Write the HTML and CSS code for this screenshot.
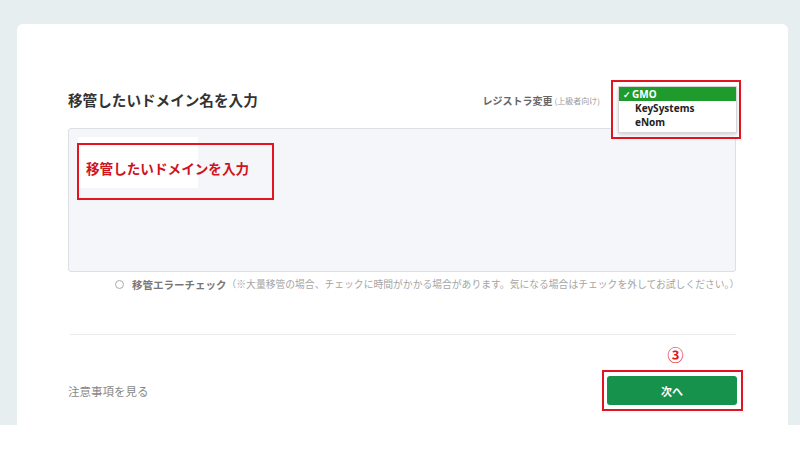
FILE: index.html
```html
<!DOCTYPE html>
<html>
<head>
  <meta charset="UTF-8" />
  <link rel="stylesheet" href="styles.css">
</head>
<body>
  <div class="stage">
    <div class="card">
      <div class="head-row">
        <h2 class="title">移管したいドメイン名を入力</h2>
        <div class="registrar">
          <span class="reg-label">レジストラ変更</span>
          <span class="reg-note">(上級者向け)</span>
        </div>
        <div class="select-anchor">
          <div class="mark menu-mark">
            <ul class="menu">
              <li class="active"><span class="tick">✓</span>GMO</li>
              <li>KeySystems</li>
              <li>eNom</li>
            </ul>
          </div>
        </div>
      </div>

      <div class="domain-box">
        <div class="patch"></div>
        <div class="mark hint-mark">
          <span class="hint">移管したいドメインを入力</span>
        </div>
      </div>

      <label class="check-row">
        <span class="radio"></span>
        <span class="check-label">移管エラーチェック</span>
        <span class="check-note">（※大量移管の場合、チェックに時間がかかる場合があります。気になる場合はチェックを外してお試しください。）</span>
      </label>

      <hr class="divider">

      <div class="foot-row">
        <a class="notes-link">注意事項を見る</a>
        <div class="next-col">
          <span class="step">③</span>
          <div class="mark btn-mark">
            <button type="submit" class="next-btn">次へ</button>
          </div>
        </div>
      </div>
    </div>
  </div>
  <div class="bottom-strip"></div>
</body>
</html>
```

FILE: styles.css
```css
body {
    margin: 0;
    background: #fff;
    font-family: "Noto Sans CJK JP", "Noto Sans", sans-serif;
    color: #333;
}

.stage {
    height: 425px;
    box-sizing: border-box;
    padding: 24px 12px 0 17px;
    background: #e7eef0;
}

.card {
    height: 100%;
    box-sizing: border-box;
    padding: 66px 52px 0 51px;
    background: #fff;
    border-radius: 6px 6px 0 0;
}

.head-row {
    display: flex;
    align-items: center;
    height: 20px;
}

.title {
    margin: 0;
    flex: 1;
    font-size: 14.6px;
    line-height: 20px;
    font-weight: bold;
    color: #333;
}

.registrar {
    display: flex;
    align-items: center;
    gap: 2px;
    margin-right: 11px;
    color: #666;
}

.reg-label {
    font-size: 10px;
    font-weight: bold;
}

.reg-note {
    font-size: 8px;
    color: #999;
}

.select-anchor {
    position: relative;
    width: 125px;
    height: 20px;
}

.mark {
    border: 2px solid #e2141f;
    box-sizing: border-box;
}

.menu-mark {
    position: absolute;
    left: 0;
    top: -10px;
    width: 130px;
    height: 59px;
    padding: 4px 2px 3px 5px;
    background: #fff;
    z-index: 2;
}

.menu {
    list-style: none;
    margin: 0;
    padding: 0 0 3px;
    background: #fff;
    border: 1px solid #d6d6d6;
    box-shadow: 0 2px 4px rgba(0, 0, 0, 0.18);
    font-family: "Noto Sans", sans-serif;
    font-size: 10px;
    font-weight: bold;
    color: #222;
}

.menu li {
    height: 14px;
    line-height: 14px;
    padding-left: 16px;
}

.menu li.active {
    padding-left: 4px;
    background: #1f9a2c;
    color: #fff;
}

.tick {
    display: inline-block;
    width: 9px;
    font-size: 9px;
}

.domain-box {
    position: relative;
    margin-top: 18px;
    height: 144px;
    box-sizing: border-box;
    background: #f4f6f9;
    border: 1px solid #dcdfe4;
    border-radius: 3px;
}

.patch {
    position: absolute;
    left: 9px;
    top: 8px;
    width: 120px;
    height: 51px;
    background: #fff;
}

.hint-mark {
    position: absolute;
    left: 8px;
    top: 14px;
    width: 197px;
    height: 57px;
    padding: 10px 0 0 7px;
}

.hint {
    font-size: 13.6px;
    font-weight: bold;
    color: #d0121f;
    font-family: "Noto Sans CJK JP", serif;
}

.check-row {
    display: flex;
    align-items: center;
    margin-top: 5px;
    padding-left: 47px;
    height: 14px;
    white-space: nowrap;
}

.check-row > span {
    flex-shrink: 0;
}

.radio {
    width: 7px;
    height: 7px;
    border: 1px solid #aaa;
    border-radius: 50%;
    margin-right: 8px;
}

.check-label {
    font-size: 10.5px;
    font-weight: bold;
    color: #777;
}

.check-note {
    font-size: 9.8px;
    color: #a5a5a5;
}

.divider {
    margin: 43px 0 0 2px;
    border: none;
    border-top: 1px solid #ebebeb;
}

.foot-row {
    display: flex;
    justify-content: space-between;
    align-items: flex-end;
    margin-top: 10px;
}

.notes-link {
    margin-bottom: 12px;
    font-size: 11.5px;
    line-height: 16px;
    color: #888;
}

.next-col {
    display: flex;
    flex-direction: column;
    align-items: center;
    margin-right: -7px;
}

.step {
    font-size: 16px;
    line-height: 18px;
    color: #e2141f;
    font-weight: bold;
    margin-left: 6px;
}

.btn-mark {
    margin-top: 7px;
    width: 141px;
    height: 41px;
    padding: 4px 4px 4px 3px;
}

button[type="submit"] {
    width: 130px;
    height: 29px;
    border: none;
    border-radius: 3px;
    background: #16924d;
    color: #fff;
    font-family: inherit;
    font-size: 11px;
    font-weight: bold;
    cursor: pointer;
}

.bottom-strip {
    height: 25px;
    background: #fff;
}
```
